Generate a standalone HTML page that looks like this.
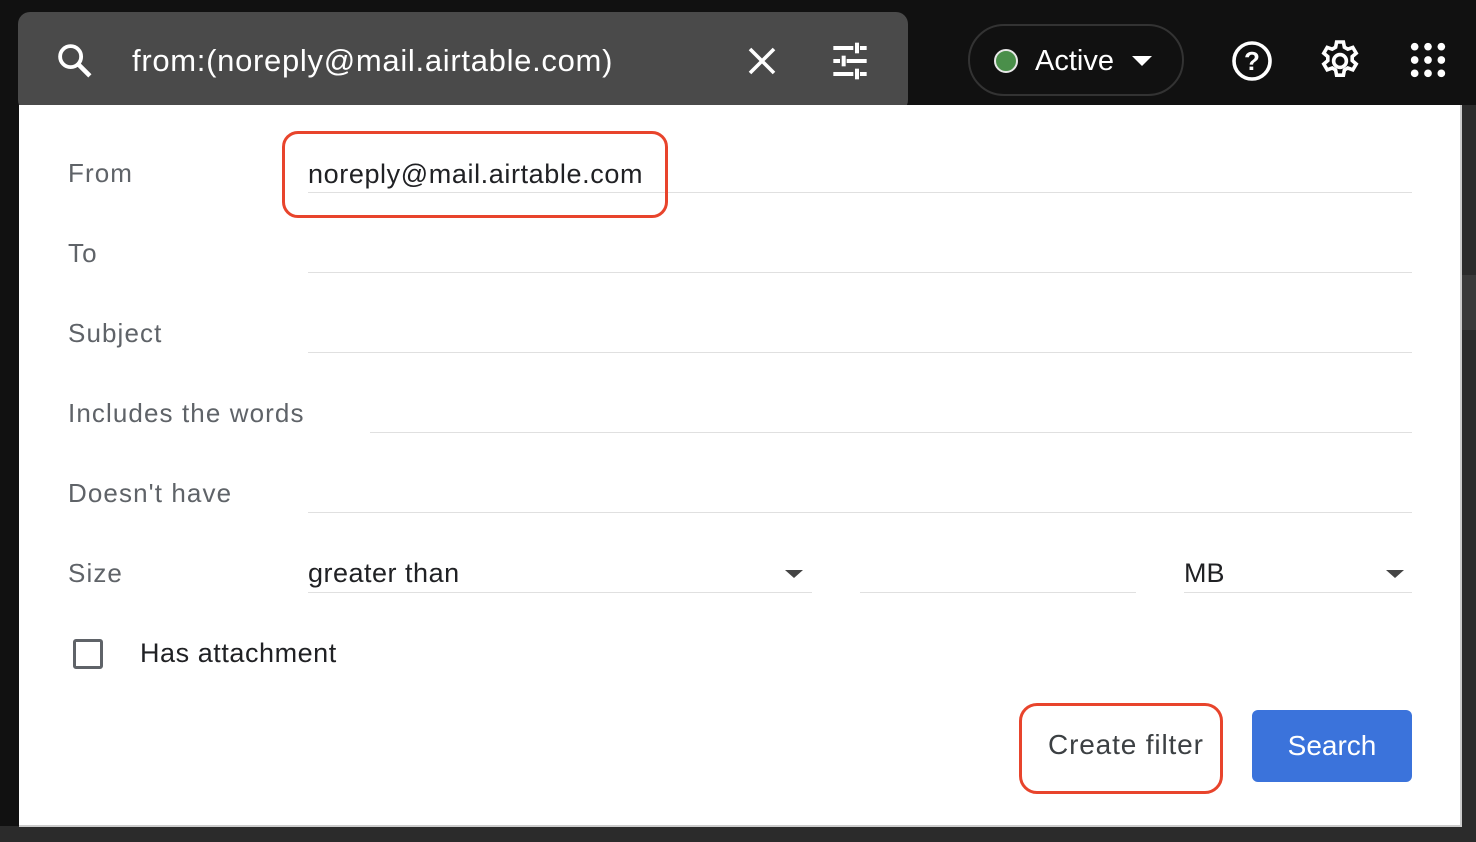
<!DOCTYPE html>
<html><head><meta charset="utf-8"><style>
*{margin:0;padding:0;box-sizing:border-box}
body{width:1476px;height:842px;background:#111;position:relative;overflow:hidden;font-family:"Liberation Sans",Arial,sans-serif}
.abs{position:absolute}
.lbl{position:absolute;left:68px;font-size:26px;color:#5f6368;letter-spacing:1.1px}
.line{position:absolute;height:1px;background:#e0e0e0}
</style></head><body>
<div class="abs" style="left:1461px;top:105px;width:15px;height:737px;background:#2b2b2b"></div>
<div class="abs" style="left:1461px;top:275px;width:15px;height:55px;background:#3a3a3a"></div>
<div class="abs" style="left:0;top:826px;width:1476px;height:16px;background:#2b2b2b"></div>
<!-- search bar -->
<div class="abs" style="left:18px;top:12px;width:890px;height:100px;background:#4a4a4a;border-radius:12px"></div>
<svg class="abs" style="left:54px;top:40px" width="42" height="42" viewBox="0 0 24 24"><circle cx="9.5" cy="9.5" r="6" fill="none" stroke="#fff" stroke-width="2.2"/><path d="M14 14l6.5 6.5" stroke="#fff" stroke-width="2.6"/></svg>
<div class="abs" style="left:132px;top:43px;font-size:31px;color:#fff;letter-spacing:0.7px">from:(noreply@mail.airtable.com)</div>
<svg class="abs" style="left:744px;top:43px" width="36" height="36" viewBox="0 0 24 24"><path d="M4 4l16 16M20 4L4 20" stroke="#fff" stroke-width="2.4"/></svg>
<svg class="abs" style="left:830px;top:41px" width="40" height="40" viewBox="0 0 24 24" fill="#fff"><rect x="2" y="3" width="12" height="2.4"/><rect x="15" y="1" width="2.4" height="6.4"/><rect x="18" y="3" width="4" height="2.4"/><rect x="2" y="10.8" width="4" height="2.4"/><rect x="7" y="8.8" width="2.4" height="6.4"/><rect x="10" y="10.8" width="12" height="2.4"/><rect x="2" y="18.6" width="12" height="2.4"/><rect x="15" y="16.6" width="2.4" height="6.4"/><rect x="18" y="18.6" width="4" height="2.4"/></svg>
<!-- active -->
<div class="abs" style="left:968px;top:24px;width:216px;height:72px;border:2px solid #333;border-radius:36px"></div>
<div class="abs" style="left:994px;top:49px;width:24px;height:24px;border-radius:50%;background:#4a8f4a;border:2px solid #e8e8e8"></div>
<div class="abs" style="left:1035px;top:45px;font-size:29px;color:#fff">Active</div>
<div class="abs" style="left:1132px;top:56px;border-left:10px solid transparent;border-right:10px solid transparent;border-top:10px solid #fff"></div>
<svg class="abs" style="left:1228px;top:37px" width="48" height="48" viewBox="0 0 24 24"><circle cx="12" cy="12" r="9" fill="none" stroke="#fff" stroke-width="1.8"/><text x="12" y="16.5" font-size="13" text-anchor="middle" fill="#fff" font-family="Liberation Sans" font-weight="bold">?</text></svg>
<svg class="abs" style="left:1316px;top:37px" width="48" height="48" viewBox="0 0 24 24"><path fill="none" stroke="#fff" stroke-width="1.8" d="M10.3 2.5h3.4l.5 2.6 1.7 1 2.5-.9 1.7 2.9-2 1.7v2l2 1.7-1.7 2.9-2.5-.9-1.7 1-.5 2.6h-3.4l-.5-2.6-1.7-1-2.5.9-1.7-2.9 2-1.7v-2l-2-1.7 1.7-2.9 2.5.9 1.7-1z"/><circle cx="12" cy="12" r="3.2" fill="none" stroke="#fff" stroke-width="1.8"/></svg>
<svg class="abs" style="left:1408px;top:40px" width="40" height="40" viewBox="0 0 24 24" fill="#fff"><circle cx="4" cy="4" r="2.3"/><circle cx="12" cy="4" r="2.3"/><circle cx="20" cy="4" r="2.3"/><circle cx="4" cy="12" r="2.3"/><circle cx="12" cy="12" r="2.3"/><circle cx="20" cy="12" r="2.3"/><circle cx="4" cy="20" r="2.3"/><circle cx="12" cy="20" r="2.3"/><circle cx="20" cy="20" r="2.3"/></svg>
<!-- panel -->
<div class="abs" style="left:19px;top:105px;width:1443px;height:722px;background:#fff;border-right:2px solid #ccc;border-bottom:2px solid #ccc"></div>
<div class="lbl" style="top:158px">From</div>
<div class="abs" style="left:308px;top:159px;font-size:27px;color:#202124;letter-spacing:0.6px">noreply@mail.airtable.com</div>
<div class="line" style="left:308px;top:192px;width:1104px"></div>
<div class="abs" style="left:282px;top:131px;width:386px;height:87px;border:3px solid #e8442c;border-radius:16px"></div>
<div class="lbl" style="top:238px">To</div>
<div class="line" style="left:308px;top:272px;width:1104px"></div>
<div class="lbl" style="top:318px">Subject</div>
<div class="line" style="left:308px;top:352px;width:1104px"></div>
<div class="lbl" style="top:398px">Includes the words</div>
<div class="line" style="left:370px;top:432px;width:1042px"></div>
<div class="lbl" style="top:478px">Doesn't have</div>
<div class="line" style="left:308px;top:512px;width:1104px"></div>
<div class="lbl" style="top:558px">Size</div>
<div class="abs" style="left:308px;top:558px;font-size:27px;color:#202124;letter-spacing:0.5px">greater than</div>
<div class="abs" style="left:785px;top:570px;border-left:9px solid transparent;border-right:9px solid transparent;border-top:8px solid #444"></div>
<div class="line" style="left:308px;top:592px;width:504px"></div>
<div class="line" style="left:860px;top:592px;width:276px"></div>
<div class="abs" style="left:1184px;top:558px;font-size:27px;color:#202124">MB</div>
<div class="abs" style="left:1386px;top:570px;border-left:9px solid transparent;border-right:9px solid transparent;border-top:8px solid #444"></div>
<div class="line" style="left:1184px;top:592px;width:228px"></div>
<div class="abs" style="left:73px;top:639px;width:30px;height:30px;border:3px solid #5f6368;border-radius:3px"></div>
<div class="abs" style="left:140px;top:638px;font-size:27px;color:#202124;letter-spacing:0.55px">Has attachment</div>
<div class="abs" style="left:1019px;top:703px;width:204px;height:91px;border:3px solid #e8442c;border-radius:18px"></div>
<div class="abs" style="left:1048px;top:729px;font-size:28px;color:#3c4043;letter-spacing:0.85px">Create filter</div>
<div class="abs" style="left:1252px;top:710px;width:160px;height:72px;background:#3b73db;border-radius:6px;color:#fff;font-size:28px;text-align:center;line-height:72px">Search</div>
</body></html>
